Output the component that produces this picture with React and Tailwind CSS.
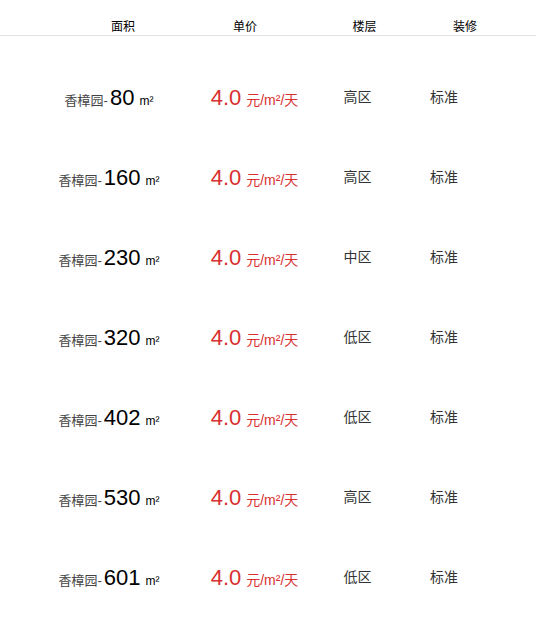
import React from "react";

const rooms = [
  { area: "80", floor: "高区" },
  { area: "160", floor: "高区" },
  { area: "230", floor: "中区" },
  { area: "320", floor: "低区" },
  { area: "402", floor: "低区" },
  { area: "530", floor: "高区" },
  { area: "601", floor: "低区" },
];

const App = () => {
  return (
    <div
      className="w-[536px] h-[618px] bg-white overflow-hidden"
      style={{ fontFamily: '"Liberation Sans", "Noto Sans CJK SC", sans-serif' }}
    >
      {/* header */}
      <div className="h-[36px] border-b border-[#e3e3e3] flex pt-[20px] pl-[62px] text-[12px] leading-[14px] text-black">
        <div className="w-[122px] text-center">面积</div>
        <div className="w-[122px] text-center">单价</div>
        <div className="w-[117px] text-center">楼层</div>
        <div className="w-[84px] text-center">装修</div>
      </div>

      <div className="pt-[21px]">
        {rooms.map((item, index) => (
          <div key={index} className="h-[80px] flex items-center pl-[36px]">
            <div className="w-[146px] flex justify-center items-baseline">
              <span className="text-[13px] text-[#444]">香樟园-</span>
              <span className="text-[22px] text-black ml-[2px]">{item.area}</span>
              <span className="text-[12px] text-black ml-[5px]">m²</span>
            </div>
            <div className="w-[145px] flex justify-center items-baseline text-[#d9302f]">
              <span className="text-[22px]">4.0</span>
              <span className="text-[14px] ml-[5px]">元/m²/天</span>
            </div>
            <div className="w-[61px] text-center text-[14px] text-[#333]">{item.floor}</div>
            <div className="w-[112px] text-center text-[14px] text-[#333]">标准</div>
          </div>
        ))}
      </div>
    </div>
  );
};

export default App;
